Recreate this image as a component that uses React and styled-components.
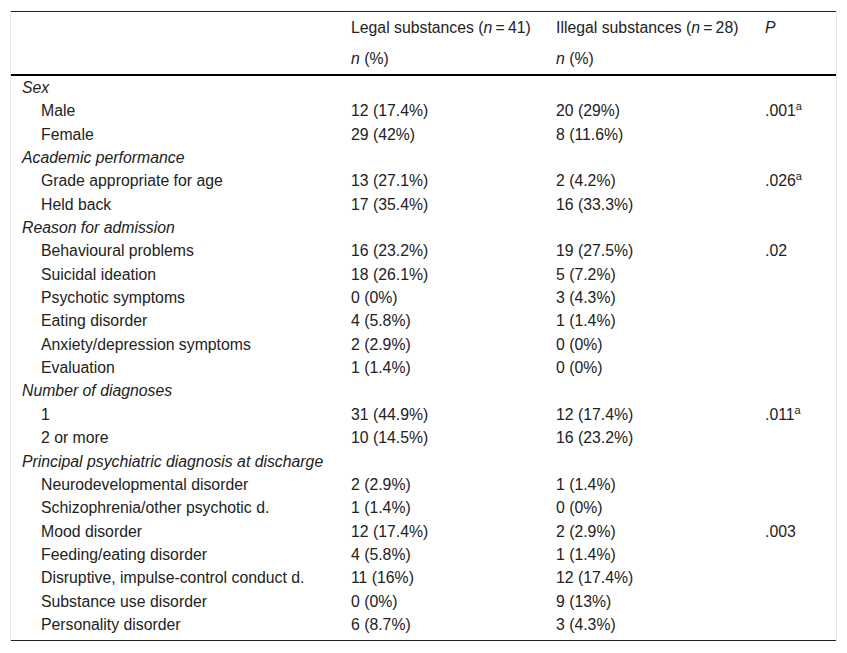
import React from "react";
import styled, { createGlobalStyle } from "styled-components";

const GlobalStyle = createGlobalStyle`
  body {
    margin: 0;
    background: #fff;
    font-family: "Liberation Sans", Arial, sans-serif;
    color: #222;
  }
`;

const Frame = styled.div`
  margin: 11px 0 0 10px;
  width: 825px;
  border-left: 1px solid #e6e6e6;
  border-right: 1px solid #e6e6e6;
`;

const Table = styled.table`
  width: 100%;
  border-collapse: collapse;
  table-layout: fixed;
  font-size: 15.8px;
`;

const Head = styled.thead`
  border-top: 1px solid #222;
  border-bottom: 2px solid #000;
`;

const Body = styled.tbody`
  border-bottom: 1px solid #222;
`;

const Th = styled.th`
  font-weight: normal;
  text-align: left;
  height: 31px;
  padding: 0 11px;
  line-height: 31px;
  white-space: nowrap;
  font-style: ${(p) => (p.$italic ? "italic" : "normal")};
`;

const Td = styled.td`
  padding: 0 11px 0 ${(p) => (p.$indent ? "30px" : "11px")};
  height: ${(p) => (p.$last ? "27.35px" : "23.35px")};
  vertical-align: top;
  line-height: 23.35px;
  white-space: nowrap;
  font-style: ${(p) => (p.$italic ? "italic" : "normal")};
`;

const Sup = styled.sup`
  font-size: 11px;
  line-height: 0;
  vertical-align: 6px;
`;

const groups = [
  {
    title: "Sex",
    rows: [
      ["Male", "12 (17.4%)", "20 (29%)", ".001", true],
      ["Female", "29 (42%)", "8 (11.6%)"],
    ],
  },
  {
    title: "Academic performance",
    rows: [
      ["Grade appropriate for age", "13 (27.1%)", "2 (4.2%)", ".026", true],
      ["Held back", "17 (35.4%)", "16 (33.3%)"],
    ],
  },
  {
    title: "Reason for admission",
    rows: [
      ["Behavioural problems", "16 (23.2%)", "19 (27.5%)", ".02"],
      ["Suicidal ideation", "18 (26.1%)", "5 (7.2%)"],
      ["Psychotic symptoms", "0 (0%)", "3 (4.3%)"],
      ["Eating disorder", "4 (5.8%)", "1 (1.4%)"],
      ["Anxiety/depression symptoms", "2 (2.9%)", "0 (0%)"],
      ["Evaluation", "1 (1.4%)", "0 (0%)"],
    ],
  },
  {
    title: "Number of diagnoses",
    rows: [
      ["1", "31 (44.9%)", "12 (17.4%)", ".011", true],
      ["2 or more", "10 (14.5%)", "16 (23.2%)"],
    ],
  },
  {
    title: "Principal psychiatric diagnosis at discharge",
    rows: [
      ["Neurodevelopmental disorder", "2 (2.9%)", "1 (1.4%)"],
      ["Schizophrenia/other psychotic d.", "1 (1.4%)", "0 (0%)"],
      ["Mood disorder", "12 (17.4%)", "2 (2.9%)", ".003"],
      ["Feeding/eating disorder", "4 (5.8%)", "1 (1.4%)"],
      ["Disruptive, impulse-control conduct d.", "11 (16%)", "12 (17.4%)"],
      ["Substance use disorder", "0 (0%)", "9 (13%)"],
      ["Personality disorder", "6 (8.7%)", "3 (4.3%)"],
    ],
  },
];

function App() {
  const total = groups.length;
  return (
    <>
      <GlobalStyle />
      <Frame>
        <Table>
          <colgroup>
            <col style={{ width: 329 }} />
            <col style={{ width: 205 }} />
            <col style={{ width: 209 }} />
            <col />
          </colgroup>
          <Head>
            <tr>
              <Th />
              <Th>
                Legal substances (<i>n</i>{"\u2009=\u2009"}41)
              </Th>
              <Th>
                Illegal substances (<i>n</i>{"\u2009=\u2009"}28)
              </Th>
              <Th $italic>P</Th>
            </tr>
            <tr>
              <Th />
              <Th>
                <i>n</i> (%)
              </Th>
              <Th>
                <i>n</i> (%)
              </Th>
              <Th />
            </tr>
          </Head>
          <Body>
            {groups.map((g, gi) => (
              <React.Fragment key={g.title}>
                <tr>
                  <Td $italic colSpan={4}>
                    {g.title}
                  </Td>
                </tr>
                {g.rows.map((r, ri) => {
                  const last = gi === total - 1 && ri === g.rows.length - 1;
                  return (
                    <tr key={r[0]}>
                      <Td $indent $last={last}>{r[0]}</Td>
                      <Td $last={last}>{r[1]}</Td>
                      <Td $last={last}>{r[2]}</Td>
                      <Td $last={last}>
                        {r[3]}
                        {r[4] && <Sup>a</Sup>}
                      </Td>
                    </tr>
                  );
                })}
              </React.Fragment>
            ))}
          </Body>
        </Table>
      </Frame>
    </>
  );
}

export default App;
